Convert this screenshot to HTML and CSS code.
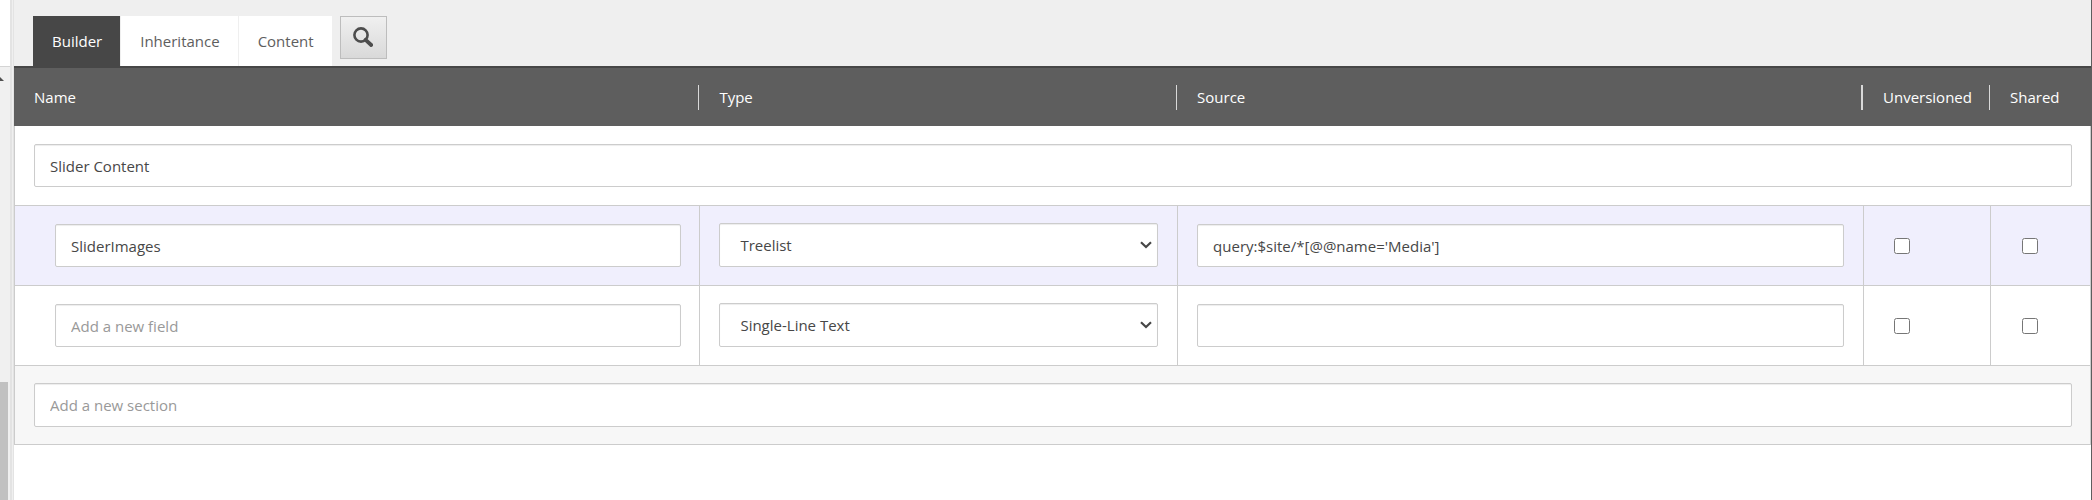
FILE: index.html
```html
<!DOCTYPE html>
<html lang="en">
<head>
<meta charset="utf-8">
<title>Template Builder</title>
<link rel="stylesheet" href="styles.css">
</head>
<body>
<div class="page">
  <aside class="tree-edge">
    <div class="tree-top"></div>
    <div class="scroll-track">
      <svg class="scroll-arrow" width="4" height="4" viewBox="0 0 4 4" aria-hidden="true"><path d="M0 0l4 4H0z" fill="#505050"/></svg>
      <div class="scroll-thumb"></div>
    </div>
  </aside>
  <div class="splitter"></div>
  <main class="editor">
    <nav class="tabs">
      <button class="tab tab-active" type="button">Builder</button>
      <button class="tab" type="button">Inheritance</button>
      <button class="tab" type="button">Content</button>
      <button class="search" type="button" aria-label="Search">
        <svg width="20" height="20" viewBox="0 0 20 20" aria-hidden="true">
          <circle cx="8" cy="8" r="6.6" fill="none" stroke="#4d4d4d" stroke-width="2.6"/>
          <path d="M12.6 12.8l5.6 5.2" stroke="#4d4d4d" stroke-width="3.8" stroke-linecap="round"/>
        </svg>
      </button>
    </nav>
    <table class="builder">
      <colgroup>
        <col class="col-name"><col class="col-type"><col><col class="col-unversioned"><col class="col-shared">
      </colgroup>
      <thead>
        <tr>
          <th><span class="head">Name</span></th>
          <th><span class="head">Type</span></th>
          <th><span class="head head-wide">Source</span></th>
          <th><span class="head">Unversioned</span></th>
          <th><span class="head head-last">Shared</span></th>
        </tr>
      </thead>
      <tbody>
        <tr>
          <td class="section" colspan="5"><input class="text" type="text" aria-label="Section name" value="Slider Content"></td>
        </tr>
        <tr class="active">
          <td class="name"><input class="text" type="text" aria-label="Field name" value="SliderImages"></td>
          <td class="kind"><select class="type" aria-label="Type"><option>Treelist</option><option>Single-Line Text</option></select></td>
          <td><input class="text" type="text" aria-label="Source" value="query:$site/*[@@name='Media']"></td>
          <td class="tick"><input class="check" type="checkbox" aria-label="Unversioned"></td>
          <td class="tick tick-last"><input class="check" type="checkbox" aria-label="Shared"></td>
        </tr>
        <tr>
          <td class="name"><input class="text" type="text" aria-label="New field name" placeholder="Add a new field"></td>
          <td class="kind"><select class="type" aria-label="New field type"><option>Single-Line Text</option><option>Treelist</option></select></td>
          <td><input class="text" type="text" aria-label="New field source"></td>
          <td class="tick"><input class="check" type="checkbox" aria-label="New field unversioned"></td>
          <td class="tick tick-last"><input class="check" type="checkbox" aria-label="New field shared"></td>
        </tr>
        <tr class="new-section">
          <td class="section" colspan="5"><input class="text" type="text" aria-label="New section name" placeholder="Add a new section"></td>
        </tr>
      </tbody>
    </table>
  </main>
</div>
</body>
</html>
```

FILE: styles.css
```css
* {
  box-sizing: border-box;
}

body {
  margin: 0;
  background: #fff;
  color: #474747;
  font: 15px/20px "Open Sans", "Noto Sans", sans-serif;
}

button,
input,
select {
  margin: 0;
  font: inherit;
  color: inherit;
}

.page {
  display: flex;
  min-height: 100vh;
  border-right: 1px solid #5e5e5e;
}

.tree-edge {
  display: flex;
  flex-direction: column;
  width: 10px;
}

.tree-top {
  height: 66px;
}

.scroll-track {
  display: flex;
  flex: 1;
  flex-direction: column;
  border-top: 1px solid #d4d4d4;
  background: #f0f0f0;
}

.scroll-arrow {
  display: block;
  margin-top: 10px;
}

.scroll-thumb {
  width: 8px;
  height: 118px;
  margin-top: auto;
  background: #c1c1c1;
}

.splitter {
  width: 4px;
  border-left: 2px solid #e3e3e3;
  border-right: 1px solid #e3e3e3;
  background: #efefef;
}

.editor {
  flex: 1;
  min-width: 0;
}

.tabs {
  display: flex;
  gap: 1px;
  padding: 16px 19px 0;
  border-bottom: 2px solid #474747;
  background: #efefef;
}

.tab {
  height: 50px;
  padding: 0 18px 0 19px;
  border: 0;
  background: #fff;
  color: #5e5e5e;
}

.tab-active {
  background: #474747;
  color: #fff;
}

.search {
  display: flex;
  align-items: center;
  justify-content: center;
  width: 47px;
  height: 43px;
  margin-left: 7px;
  padding: 0 0 2px;
  border: 1px solid #bdbdbd;
  background: linear-gradient(#f0f0f0, #d9d9d9);
}

.builder {
  width: 100%;
  table-layout: fixed;
  border-spacing: 0;
}

.col-name {
  width: 33%;
}

.col-type {
  width: 23%;
}

.col-unversioned {
  width: 127px;
}

.col-shared {
  width: 101px;
}

th {
  padding: 17px 0 16px;
  background: #5e5e5e;
  color: #fff;
  font-weight: 400;
  text-align: left;
}

.head {
  display: block;
  padding-left: 20px;
  border-right: 1px solid #d9d9d9;
  line-height: 25px;
}

.head-wide {
  border-right-width: 2px;
}

.head-last {
  border-right: 0;
}

td {
  height: 80px;
  padding: 0 19px;
  border-left: 1px solid #ccc;
  border-bottom: 1px solid #ccc;
  vertical-align: middle;
}

td:last-child {
  border-right: 1px solid #ccc;
}

.section {
  padding-right: 18px;
}

.name {
  padding-right: 18px;
  padding-left: 40px;
}

.kind {
  padding-bottom: 1px;
}

.tick {
  padding-left: 30px;
}

.tick-last {
  padding-left: 31px;
}

.active {
  background: #f0effd;
}

.new-section {
  background: #f7f7f7;
}

.new-section td {
  height: 79px;
}

.text,
.type {
  display: block;
  width: 100%;
  height: 43px;
  border: 1px solid #ccc;
  border-radius: 2px;
  background-color: #fff;
  box-shadow: inset 0 1px 1px rgba(0, 0, 0, 0.075);
}

.text {
  padding: 0 15px;
}

.text::placeholder {
  color: #999;
  opacity: 1;
}

.type {
  height: 44px;
  padding: 0 24px 0 20px;
  appearance: none;
  background-image: url("data:image/svg+xml,%3Csvg xmlns='http://www.w3.org/2000/svg' width='12' height='8' viewBox='0 0 12 8'%3E%3Cpath d='M1 1.2l5 4.8 5-4.8' fill='none' stroke='%23474747' stroke-width='2.2'/%3E%3C/svg%3E");
  background-position: right 5px center;
  background-repeat: no-repeat;
}

.new-section .text {
  height: 44px;
}

.check {
  display: block;
  width: 16px;
  height: 16px;
}
```
